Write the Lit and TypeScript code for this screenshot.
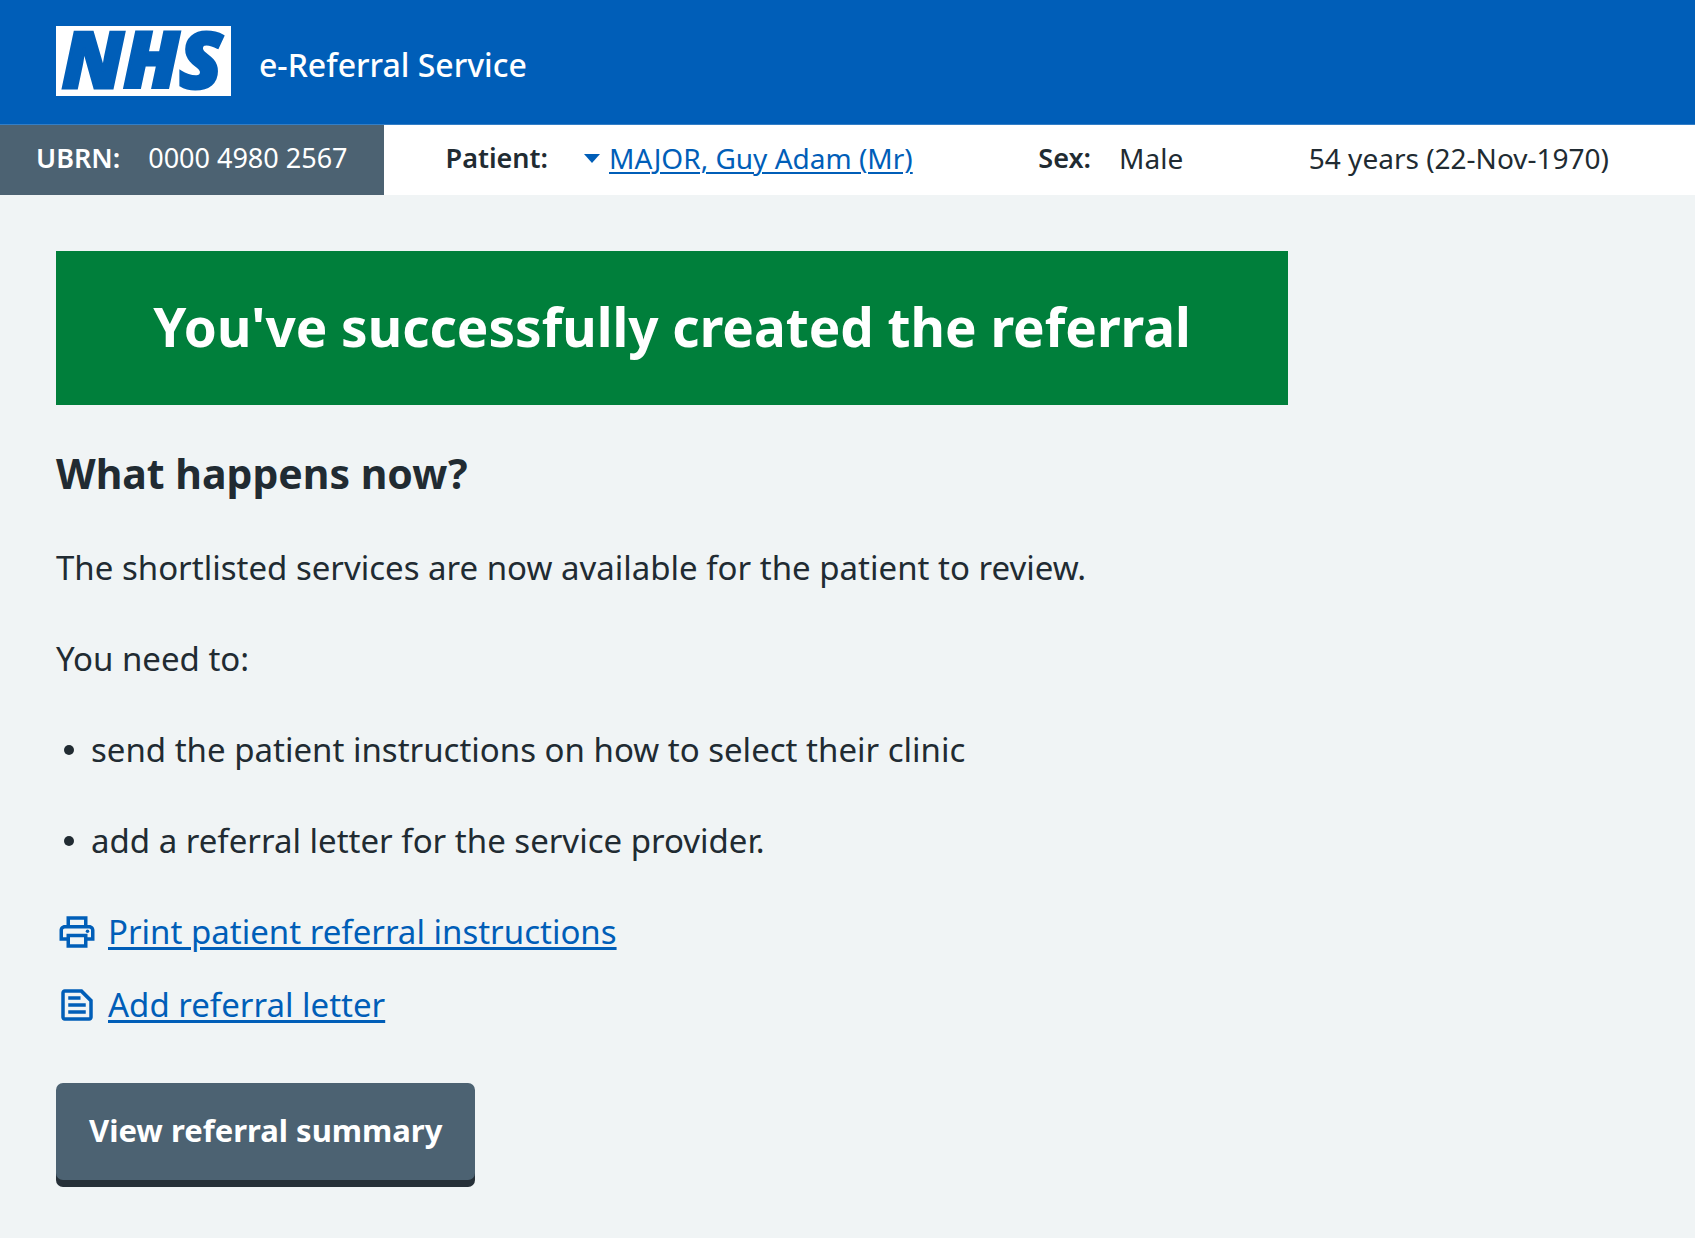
import { LitElement, html, css, svg } from "lit";
import { customElement } from "lit/decorators.js";

const printer = svg`<path d="M19 8h-1V3H6v5H5c-1.660 0-3 1.340-3 3v6h4v4h12v-4h4v-6c0-1.660-1.340-3-3-3zM8 5h8v3H8V5zm8 12v2H8v-4h8v2zm2-2v-2H6v2H4v-4c0-.55.45-1 1-1h14c.55 0 1 .45 1 1v4h-2z"/><circle cx="18" cy="11.500" r="1"/>`;
const letter = svg`<path d="M15 3H5c-1.100 0-1.990.9-1.990 2L3 19c0 1.100.89 2 1.990 2H19c1.100 0 2-.9 2-2V9l-6-6zM5 19V5h9l5 5v9H5z"/><path d="M7 7h7v2H7zM7 11h10v2H7zM7 15h10v2H7z"/>`;

@customElement("app-root")
export class AppRoot extends LitElement {
  static styles = css`
    :host {
      display: block;
      min-height: 100vh;
      background: #f0f4f5;
      color: #212b32;
      font-family: "Noto Sans", "Open Sans", sans-serif;
      font-size: 33px;
      line-height: 49px;
    }
    * { box-sizing: border-box; }
    h1, h2, p, ul, dl, dd { margin: 0; padding: 0; }
    a { color: #005eb8; text-decoration-thickness: 3px; text-underline-offset: 3px; }

    .header {
      display: flex;
      align-items: flex-start;
      gap: 28px;
      padding: 26px 56px 28px;
      background: #005eb8;
      border-bottom: 1px solid #337ec6;
      color: #fff;
    }
    .logo { display: block; width: 175px; height: 70px; overflow: visible; }
    .logo-text {
      font: italic 800 78px "Open Sans", sans-serif;
      fill: #005eb8;
      stroke: #005eb8;
      stroke-width: 3px;
    }
    .service { padding-top: 14px; font-size: 32px; font-weight: 500; }

    .patient {
      display: flex;
      background: #fff;
      font-size: 28px;
      line-height: 66px;
      white-space: nowrap;
    }
    .item { display: flex; gap: 28px; padding-bottom: 4px; }
    .label { font-size: 27px; font-weight: 600; }
    .ubrn { padding: 0 36px 4px; background: #4c6272; color: #fff; font-size: 27px; }
    .details {
      flex: 1;
      display: flex;
      justify-content: space-between;
      padding: 0 86px 0 62px;
    }
    .name-item { gap: 36px; }
    .name { display: flex; align-items: center; gap: 9px; }
    .name a { text-decoration-thickness: 2px; }
    .caret { width: 16px; height: 9px; fill: #005eb8; }

    .main { padding: 56px; }
    .banner {
      max-width: 1232px;
      padding: 41px 42px 43px;
      background: #007f3b;
      color: #fff;
      text-align: center;
    }
    .title { font-size: 53px; line-height: 70px; font-weight: 700; }
    .subtitle { margin: 41px 0 43px; font-size: 41px; line-height: 54px; font-weight: 700; }
    .text { margin-bottom: 42px; }
    .list { list-style: none; }
    .entry { display: flex; align-items: center; gap: 17px; margin-bottom: 42px; padding-left: 8px; }
    .dot { width: 10px; height: 10px; border-radius: 50%; background: #212b32; }
    .action { display: flex; align-items: center; gap: 10px; margin-bottom: 24px; }
    .icon { width: 42px; height: 42px; fill: #005eb8; }
    .button {
      display: block;
      margin-top: 54px;
      padding: 23px 33px 25px;
      border: 0;
      border-radius: 7px;
      box-shadow: 0 7px 0 #263038;
      background: #4c6272;
      color: #fff;
      font: 700 31px/49px "Noto Sans", "Open Sans", sans-serif;
    }
  `;

  private action(icon: unknown, label: string) {
    return html`<p class="action">
      <svg class="icon" viewBox="0 0 24 24" aria-hidden="true">${icon}</svg>
      <a href="#">${label}</a>
    </p>`;
  }

  render() {
    return html`
      <header class="header">
        <svg class="logo" viewBox="0 0 175 70" role="img" aria-label="NHS">
          <rect width="175" height="70" fill="#fff" />
          <text class="logo-text" x="86" y="62" text-anchor="middle">NHS</text>
        </svg>
        <span class="service">e-Referral Service</span>
      </header>
      <dl class="patient">
        <div class="item ubrn"><dt class="label">UBRN:</dt><dd>0000 4980 2567</dd></div>
        <div class="details">
          <div class="item name-item">
            <dt class="label">Patient:</dt>
            <dd class="name">
              <svg class="caret" viewBox="0 0 16 9" aria-hidden="true"><path d="M0 0h16L8 9z" /></svg>
              <a href="#">MAJOR, Guy Adam (Mr)</a>
            </dd>
          </div>
          <div class="item"><dt class="label">Sex:</dt><dd>Male</dd></div>
          <div class="item"><dd>54 years (22-Nov-1970)</dd></div>
        </div>
      </dl>
      <main class="main">
        <div class="banner"><h1 class="title">You've successfully created the referral</h1></div>
        <h2 class="subtitle">What happens now?</h2>
        <p class="text">The shortlisted services are now available for the patient to review.</p>
        <p class="text">You need to:</p>
        <ul class="list">
          <li class="entry"><span class="dot"></span>send the patient instructions on how to select their clinic</li>
          <li class="entry"><span class="dot"></span>add a referral letter for the service provider.</li>
        </ul>
        ${this.action(printer, "Print patient referral instructions")}
        ${this.action(letter, "Add referral letter")}
        <button class="button" type="button">View referral summary</button>
      </main>
    `;
  }
}
